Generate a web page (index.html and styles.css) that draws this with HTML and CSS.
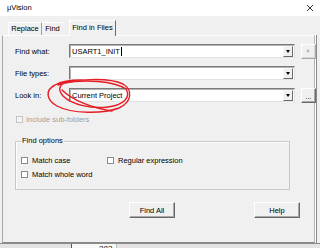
FILE: index.html
```html
<!DOCTYPE html>
<html>
<head>
<meta charset="utf-8">
<link rel="stylesheet" href="styles.css">
</head>
<body>
<div class="dialog">
  <div class="titlebar">
    <span class="title">µVision</span>
    <svg class="close" width="8" height="8" viewBox="0 0 8 8"><path d="M1 1L7 7M7 1L1 7" stroke="#333" stroke-width="1"/></svg>
  </div>
  <div class="tabs">
    <div class="tab t-replace">Replace</div>
    <div class="tab t-find">Find</div>
    <div class="tab active">Find in Files</div>
  </div>
  <div class="panel">
    <div class="form">
      <label class="lbl">Find what:</label>
      <div class="combo"><span class="val">USART1_INIT<span class="caret"></span></span><span class="drop"><i class="tri"></i></span></div>
      <button class="sbtn dis"><i class="rtri"></i></button>

      <label class="lbl">File types:</label>
      <div class="combo"><span class="val"></span><span class="drop"><i class="tri"></i></span></div>
      <span></span>

      <label class="lbl">Look in:</label>
      <div class="combo"><span class="val">Current Project</span><span class="drop"><i class="tri"></i></span></div>
      <button class="sbtn dots">...</button>
    </div>

    <div class="check dis sub"><span class="box"></span><span>Include sub-folders</span></div>

    <fieldset class="group">
      <legend>Find options</legend>
      <div class="opts">
        <div class="check"><span class="box"></span><span>Match case</span></div>
        <div class="check"><span class="box"></span><span>Regular expression</span></div>
        <div class="check"><span class="box"></span><span>Match whole word</span></div>
      </div>
    </fieldset>

    <div class="buttons">
      <button class="btn">Find All</button>
      <button class="btn">Help</button>
    </div>
  </div>
  <svg class="annot" width="320" height="248" viewBox="0 0 320 248">
    <path d="M58 85 C75 79 108 77 123 84 C133 90 132 102 119 108 C103 114 72 114 57 106 C46 100 45 90 55 85 C62 81 72 80 82 80" fill="none" stroke="#e61c24" stroke-width="1.4" stroke-linecap="round"/>
    <path d="M64 83 C84 79 114 81 126 89 C131 97 124 105 108 107 C92 109 72 105 63 96 C58 90 59 86 64 83" fill="none" stroke="#e61c24" stroke-width="1.4" stroke-linecap="round"/>
    <path d="M62 90 C72 100 92 108 112 111" fill="none" stroke="#e61c24" stroke-width="1.4" stroke-linecap="round"/>
  </svg>
</div>
<div class="behind">
  <div class="b-left"></div>
  <div class="b-cell">283</div>
  <div class="b-rest"></div>
</div>
</body>
</html>
```

FILE: styles.css
```css
* { box-sizing: border-box; }
html, body { margin: 0; padding: 0; }
body {
  width: 320px;
  height: 248px;
  overflow: hidden;
  background: #f0f0f0;
  font-family: "Liberation Sans", Arial, sans-serif;
  font-size: 7.5px;
  color: #000;
}
.dialog {
  position: relative;
  height: 244px;
  background: #f0f0f0;
  border-bottom: 1px solid #8a8a8a;
}
.titlebar {
  height: 16px;
  background: #fff;
  display: flex;
  align-items: center;
  justify-content: space-between;
  padding: 0 6px 1px 7px;
}
.close { display: block; }
.tabs {
  height: 19px;
  display: flex;
  align-items: flex-end;
  padding-left: 8px;
  position: relative;
  z-index: 1;
}
.tab {
  height: 13px;
  line-height: 12px;
  text-align: center;
  border-top: 1px solid #fff;
  border-left: 1px solid #fff;
  border-right: 1px solid #a0a0a0;
}
.t-replace { width: 34px; }
.t-find { width: 21px; border-left: none; border-right: none; }
.tab.active {
  width: 47px;
  height: 16px;
  line-height: 14px;
  margin-left: 6px;
  margin-bottom: -1px;
  background: #f0f0f0;
  border-right: 1px solid #6a6a6a;
}
.panel {
  margin-left: 2px;
  width: 313px;
  height: 208px;
  border-top: 1px solid #fff;
  border-left: 1px solid #a8a8a8;
  border-right: 1px solid #b4b4b4;
  border-bottom: 1px solid #8a8a8a;
  box-shadow: 1px 0 0 #fff, 2px 0 0 #8a8a8a;
  padding: 8px 0 0 12px;
}
.form {
  display: grid;
  grid-template-columns: 48px 226px 15px;
  grid-auto-rows: 14px;
  column-gap: 6px;
  row-gap: 8px;
  align-items: center;
}
.lbl { white-space: nowrap; }
.combo {
  height: 14px;
  background: #fff;
  border: 1px solid;
  border-color: #7a7a7a #e3e3e3 #e3e3e3 #7a7a7a;
  box-shadow: inset 1px 1px 0 #b4b4b4;
  display: flex;
  align-items: center;
  padding: 0 1px 0 2px;
}
.val {
  flex: 1;
  display: flex;
  align-items: center;
  white-space: nowrap;
}
.caret {
  display: inline-block;
  width: 1px;
  height: 9px;
  background: #000;
  margin-left: 1px;
}
.drop {
  width: 10px;
  height: 11px;
  background: #f0f0f0;
  border: 1px solid;
  border-color: #f8f8f8 #6a6a6a #6a6a6a #f8f8f8;
  display: flex;
  align-items: center;
  justify-content: center;
}
.tri {
  width: 0;
  height: 0;
  border-left: 2.5px solid transparent;
  border-right: 2.5px solid transparent;
  border-top: 3px solid #000;
}
.sbtn {
  height: 15px;
  width: 15px;
  padding: 0;
  margin: 0;
  background: #f0f0f0;
  border: 1px solid;
  border-color: #fff #6a6a6a #6a6a6a #fff;
  box-shadow: inset -1px -1px 0 #a8a8a8;
  font-family: inherit;
  font-size: 7px;
  display: flex;
  align-items: center;
  justify-content: center;
}
.sbtn.dis {
  border-color: #fff #a8a8a8 #a8a8a8 #fff;
  box-shadow: inset -1px -1px 0 #d8d8d8;
}
.rtri {
  width: 0;
  height: 0;
  border-top: 2px solid transparent;
  border-bottom: 2px solid transparent;
  border-left: 3px solid #b8b8b8;
}
.dots {
  align-items: flex-end;
  padding-bottom: 2px;
  line-height: 7px;
  color: #000;
}
.check {
  display: flex;
  align-items: center;
  gap: 4px;
  height: 14px;
  white-space: nowrap;
}
.box {
  width: 7px;
  height: 7px;
  background: #fff;
  border: 1px solid #8a8a8a;
  flex: none;
}
.check.dis { color: #a0a0a0; }
.check.dis .box { border-color: #c4c4c4; background: #f4f4f4; }
.sub {
  margin: 10px 0 0 1px;
  gap: 3px;
}
.group {
  margin: 10px 0 0 0;
  width: 275px;
  height: 54px;
  padding: 0 0 0 5px;
  border: 1px solid #c8c8c8;
  box-shadow: inset 1px 1px 0 #fff;
}
.group legend {
  padding: 0 1px;
  line-height: 10px;
}
.opts {
  display: grid;
  grid-template-columns: 86px auto;
  grid-auto-rows: 14px;
  padding-top: 7px;
}
.opts .check:nth-child(3) { grid-column: 1; }
.buttons {
  display: flex;
  gap: 79px;
  padding-left: 114px;
  margin-top: 12px;
}
.btn {
  width: 46px;
  height: 16px;
  margin: 0;
  padding: 0;
  background: #f0f0f0;
  border: 1px solid;
  border-color: #fff #6a6a6a #6a6a6a #fff;
  box-shadow: inset -1px -1px 0 #a8a8a8;
  font-family: inherit;
  font-size: 7.5px;
  color: #000;
}
.annot {
  position: absolute;
  left: 0;
  top: 0;
  pointer-events: none;
}
.behind {
  height: 4px;
  overflow: hidden;
  display: flex;
  background: #e4e4e4;
}
.b-left { width: 71px; }
.b-cell {
  width: 46px;
  border-left: 1px solid #555;
  border-right: 1px solid #c0c0c0;
  background: #f8f8f8;
  padding: 1px 0 0 27px;
  line-height: 8px;
  font-size: 8px;
  color: #222;
}
.b-rest { flex: 1; }
```
